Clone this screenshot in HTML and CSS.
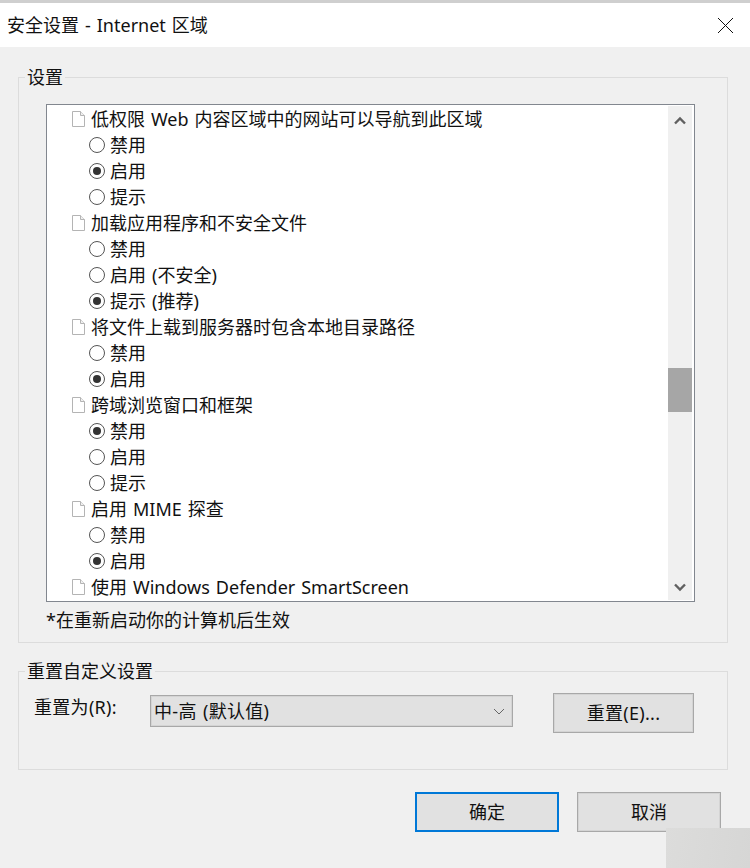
FILE: index.html
```html
<!DOCTYPE html>
<html lang="zh-CN">
<head>
<meta charset="utf-8">
<title>安全设置 - Internet 区域</title>
<link rel="stylesheet" href="styles.css">
</head>
<body>
<svg class="sprites" width="0" height="0" aria-hidden="true">
  <symbol id="page" viewBox="0 0 13 16">
    <path d="M.5.5h8l4 4v11H.5z" fill="#fff" stroke="#b4b4b4"/>
    <path d="M8.5.5v4h4" fill="#f0f0f0" stroke="#b4b4b4"/>
  </symbol>
</svg>
<header class="titlebar">
  <span class="title">安全设置 - Internet 区域</span>
  <svg class="close" width="17" height="17" viewBox="0 0 17 17" aria-label="关闭"><path d="M1 1l15 15M16 1L1 16" stroke="#111" stroke-width="1" fill="none"/></svg>
</header>
<main class="content">
  <fieldset class="group group-settings">
    <legend>设置</legend>
    <div class="group-body">
      <div class="listbox">
        <div class="rows">
          <div class="row head"><svg class="page"><use href="#page"/></svg>低权限 Web 内容区域中的网站可以导航到此区域</div>
          <div class="row opt"><i class="radio"></i>禁用</div>
          <div class="row opt"><i class="radio on"></i>启用</div>
          <div class="row opt"><i class="radio"></i>提示</div>
          <div class="row head"><svg class="page"><use href="#page"/></svg>加载应用程序和不安全文件</div>
          <div class="row opt"><i class="radio"></i>禁用</div>
          <div class="row opt"><i class="radio"></i>启用 (不安全)</div>
          <div class="row opt"><i class="radio on"></i>提示 (推荐)</div>
          <div class="row head"><svg class="page"><use href="#page"/></svg>将文件上载到服务器时包含本地目录路径</div>
          <div class="row opt"><i class="radio"></i>禁用</div>
          <div class="row opt"><i class="radio on"></i>启用</div>
          <div class="row head"><svg class="page"><use href="#page"/></svg>跨域浏览窗口和框架</div>
          <div class="row opt"><i class="radio on"></i>禁用</div>
          <div class="row opt"><i class="radio"></i>启用</div>
          <div class="row opt"><i class="radio"></i>提示</div>
          <div class="row head"><svg class="page"><use href="#page"/></svg>启用 MIME 探查</div>
          <div class="row opt"><i class="radio"></i>禁用</div>
          <div class="row opt"><i class="radio on"></i>启用</div>
          <div class="row head"><svg class="page"><use href="#page"/></svg>使用 Windows Defender SmartScreen</div>
        </div>
        <div class="scrollbar">
          <svg class="arrow arrow-up" width="12" height="9" viewBox="0 0 12 9"><path d="M1 7.5l5-5 5 5" fill="none" stroke="#606060" stroke-width="2.4"/></svg>
          <div class="thumb"></div>
          <svg class="arrow arrow-down" width="12" height="9" viewBox="0 0 12 9"><path d="M1 1.5l5 5 5-5" fill="none" stroke="#606060" stroke-width="2.4"/></svg>
        </div>
      </div>
      <p class="note">*在重新启动你的计算机后生效</p>
    </div>
  </fieldset>
  <fieldset class="group group-reset">
    <legend>重置自定义设置</legend>
    <div class="reset-row">
      <span class="reset-label">重置为(R):</span>
      <div class="select">
        <span>中-高 (默认值)</span>
        <svg width="12" height="7" viewBox="0 0 12 7"><path d="M1 1l5 5 5-5" fill="none" stroke="#666" stroke-width="1"/></svg>
      </div>
      <button class="btn btn-reset" type="button">重置(E)...</button>
    </div>
  </fieldset>
  <div class="actions">
    <button class="btn btn-action btn-primary" type="button">确定</button>
    <button class="btn btn-action" type="button">取消</button>
  </div>
</main>
<div class="corner"></div>
</body>
</html>
```

FILE: styles.css
```css
* { box-sizing: border-box; }

html, body {
  margin: 0;
  height: 868px;
  overflow: hidden;
}

body {
  position: relative;
  background: #f0f0f0;
  color: #111;
  font: 400 18px/26px "Noto Sans", "Noto Sans CJK SC", sans-serif;
  word-spacing: 1.3px;
}

.sprites { display: block; height: 0; }

.titlebar {
  height: 47px;
  background: #fff;
  border-top: 3px solid #cfcfcf;
  padding: 0 16px 0 7px;
  display: flex;
  align-items: center;
  justify-content: space-between;
}

.title { line-height: 44px; }

.close { display: block; }

.content { padding: 17px 22px 0 18px; }

.group {
  margin: 0;
  padding: 0;
  min-width: 0;
  border: 1px solid #dcdcdc;
}

.group legend {
  margin-left: 6px;
  padding: 0 2px;
  height: 26px;
}

.group-body { padding: 14px 32px 4px 27px; }

.listbox {
  height: 498px;
  border: 1px solid #82878f;
  background: #fff;
  padding: 1px 2px 1px 0;
  display: flex;
}

.rows { flex: 1; min-width: 0; }

.row {
  height: 26px;
  white-space: nowrap;
  display: flex;
  align-items: center;
}

.head { padding-left: 25px; }
.opt { padding-left: 42px; }

.page {
  width: 13px;
  height: 16px;
  margin-right: 6px;
  flex: none;
}

.radio {
  width: 16px;
  height: 16px;
  margin-right: 5px;
  flex: none;
  border: 1px solid #555;
  border-radius: 50%;
  background: #fff;
  display: flex;
  align-items: center;
  justify-content: center;
}

.radio.on::after {
  content: "";
  width: 8px;
  height: 8px;
  border-radius: 50%;
  background: #333;
}

.scrollbar {
  width: 24px;
  flex: none;
  background: #f0f0f0;
  display: flex;
  flex-direction: column;
  align-items: center;
}

.arrow { display: block; flex: none; }
.arrow-up { margin-top: 10px; }

.thumb {
  width: 100%;
  height: 44px;
  margin-top: 243px;
  background: #a6a6a6;
}

.arrow-down { margin-top: auto; margin-bottom: 8px; }

.note {
  margin: 0;
  height: 36px;
  line-height: 36px;
}

.group-reset { margin-top: 15px; }

.reset-row {
  display: flex;
  align-items: flex-start;
  padding: 9px 33px 36px 15px;
  letter-spacing: 0.3px;
}

.reset-label {
  width: 116px;
  flex: none;
  margin-top: 1px;
}

.select {
  width: 363px;
  height: 32px;
  margin-top: 2px;
  flex: none;
  padding: 0 7px 0 3px;
  border: 1px solid #a8a8a8;
  box-shadow: inset 0 0 0 1px #d4d4d4;
  background: #e1e1e1;
  display: flex;
  align-items: center;
  justify-content: space-between;
}

.btn {
  font: inherit;
  letter-spacing: inherit;
  word-spacing: inherit;
  color: inherit;
  padding: 0;
  background: #e1e1e1;
  border: 1px solid #a8a8a8;
  box-shadow: inset 0 0 0 1px #d4d4d4;
}

.btn-reset {
  width: 141px;
  height: 40px;
  margin-left: 40px;
  flex: none;
}

.actions {
  margin-top: 22px;
  padding-right: 7px;
  display: flex;
  justify-content: flex-end;
  gap: 18px;
}

.btn-action { width: 144px; height: 40px; }

.btn-primary { border: 2px solid #0078d7; box-shadow: none; }

.corner {
  position: absolute;
  right: 0;
  bottom: 0;
  width: 84px;
  height: 40px;
  background: linear-gradient(100deg, #dcdcdb, #d6d6d5);
}
```
